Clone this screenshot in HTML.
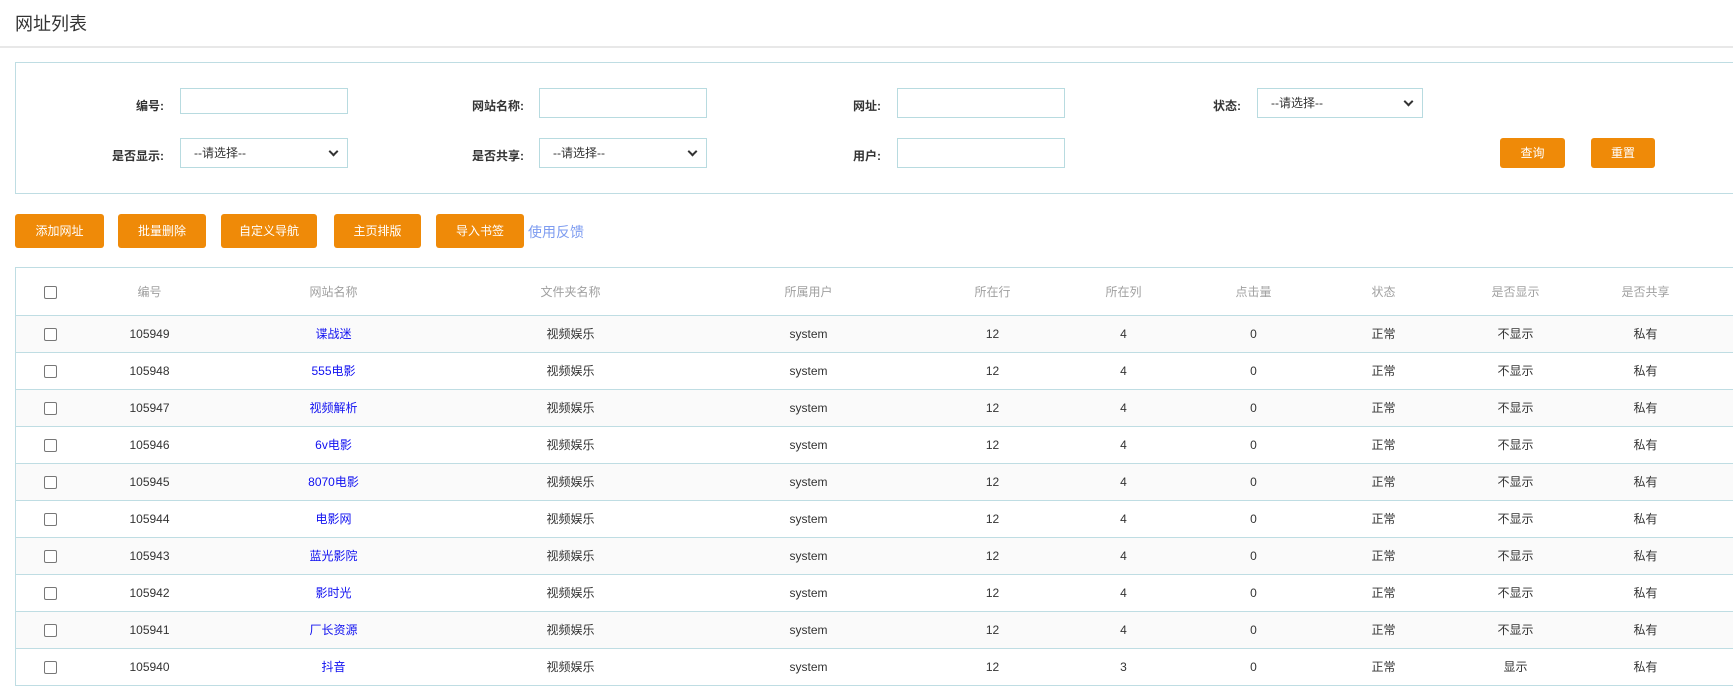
<!DOCTYPE html>
<html><head><meta charset="utf-8"><style>
*{box-sizing:border-box;margin:0;padding:0}
body{width:1733px;height:692px;overflow:hidden;background:#fff;font-family:"Liberation Sans","Noto Sans CJK SC",sans-serif;font-size:12px;color:#333;position:relative}
.abs{position:absolute}
.title{left:15px;top:10px;font-size:18px;color:#333}
.hline{left:0;top:46px;width:1733px;height:2px;background:#e8e8e8}
.search{left:15px;top:62px;width:1730px;height:132px;border:1px solid #bfdde3}
.lbl{font-weight:bold;font-size:12px;color:#333;text-align:right;width:100px;line-height:14px}
.inp{border:1px solid #b8dbe0;height:28px;background:#fff}
.sel{border:1px solid #b8dbe0;height:30px;background:#fff;padding-left:13px;line-height:28px;font-size:12px;color:#333}
.sel:after{content:"";position:absolute;right:10px;top:9px;width:5px;height:5px;border-right:2px solid #333;border-bottom:2px solid #333;transform:rotate(45deg)}
.btn{background:#ef8a08;color:#fff;border-radius:3px;text-align:center;font-size:12px}
table{position:absolute;left:15px;top:267px;border-collapse:collapse;table-layout:fixed;width:1730px}
td,th{text-align:center;font-size:12px;height:37px;border-bottom:1px solid #bfdde3;line-height:14px}
th{font-weight:normal;color:#a0a0a0;height:48px}
table{border-top:1px solid #bfdde3;border-left:1px solid #bfdde3}
tbody tr:nth-child(odd){background:#fafafa}
a{color:#1010f0;text-decoration:none}
.cb{display:inline-block;width:13px;height:13px;border:1px solid #777;border-radius:2px;vertical-align:middle;background:#fff}
</style></head><body>
<div class="abs title">网址列表</div>
<div class="abs hline"></div>
<div class="abs search"></div>
<div class="abs lbl" style="left:64px;top:99px">编号:</div>
<div class="abs inp" style="left:180px;top:88px;width:168px;height:26px"></div>
<div class="abs lbl" style="left:424px;top:99px">网站名称:</div>
<div class="abs inp" style="left:539px;top:88px;width:168px;height:30px"></div>
<div class="abs lbl" style="left:781px;top:99px">网址:</div>
<div class="abs inp" style="left:897px;top:88px;width:168px;height:30px"></div>
<div class="abs lbl" style="left:1141px;top:99px">状态:</div>
<div class="abs sel" style="left:1257px;top:88px;width:166px">--请选择--</div>
<div class="abs lbl" style="left:64px;top:149px">是否显示:</div>
<div class="abs sel" style="left:180px;top:138px;width:168px">--请选择--</div>
<div class="abs lbl" style="left:424px;top:149px">是否共享:</div>
<div class="abs sel" style="left:539px;top:138px;width:168px">--请选择--</div>
<div class="abs lbl" style="left:781px;top:149px">用户:</div>
<div class="abs inp" style="left:897px;top:138px;width:168px;height:30px"></div>
<div class="abs btn" style="left:1500px;top:138px;width:65px;height:30px;line-height:30px">查询</div>
<div class="abs btn" style="left:1591px;top:138px;width:64px;height:30px;line-height:30px">重置</div>
<div class="abs btn" style="left:15px;top:214px;width:89px;height:34px;line-height:34px">添加网址</div>
<div class="abs btn" style="left:118px;top:214px;width:88px;height:34px;line-height:34px">批量删除</div>
<div class="abs btn" style="left:221px;top:214px;width:96px;height:34px;line-height:34px">自定义导航</div>
<div class="abs btn" style="left:334px;top:214px;width:87px;height:34px;line-height:34px">主页排版</div>
<div class="abs btn" style="left:436px;top:214px;width:88px;height:34px;line-height:34px">导入书签</div>
<div class="abs" style="left:528px;top:222px;font-size:14px;color:#7e9cf0">使用反馈</div>
<table>
<colgroup><col style="width:70px"><col style="width:128px"><col style="width:240px"><col style="width:234px"><col style="width:242px"><col style="width:126px"><col style="width:136px"><col style="width:124px"><col style="width:136px"><col style="width:128px"><col style="width:132px"><col></colgroup>
<thead><tr><th><span class="cb"></span></th><th>编号</th><th>网站名称</th><th>文件夹名称</th><th>所属用户</th><th>所在行</th><th>所在列</th><th>点击量</th><th>状态</th><th>是否显示</th><th>是否共享</th><th></th></tr></thead>
<tbody>
<tr><td><span class="cb"></span></td><td>105949</td><td><a>谍战迷</a></td><td>视频娱乐</td><td>system</td><td>12</td><td>4</td><td>0</td><td>正常</td><td>不显示</td><td>私有</td><td></td></tr>
<tr><td><span class="cb"></span></td><td>105948</td><td><a>555电影</a></td><td>视频娱乐</td><td>system</td><td>12</td><td>4</td><td>0</td><td>正常</td><td>不显示</td><td>私有</td><td></td></tr>
<tr><td><span class="cb"></span></td><td>105947</td><td><a>视频解析</a></td><td>视频娱乐</td><td>system</td><td>12</td><td>4</td><td>0</td><td>正常</td><td>不显示</td><td>私有</td><td></td></tr>
<tr><td><span class="cb"></span></td><td>105946</td><td><a>6v电影</a></td><td>视频娱乐</td><td>system</td><td>12</td><td>4</td><td>0</td><td>正常</td><td>不显示</td><td>私有</td><td></td></tr>
<tr><td><span class="cb"></span></td><td>105945</td><td><a>8070电影</a></td><td>视频娱乐</td><td>system</td><td>12</td><td>4</td><td>0</td><td>正常</td><td>不显示</td><td>私有</td><td></td></tr>
<tr><td><span class="cb"></span></td><td>105944</td><td><a>电影网</a></td><td>视频娱乐</td><td>system</td><td>12</td><td>4</td><td>0</td><td>正常</td><td>不显示</td><td>私有</td><td></td></tr>
<tr><td><span class="cb"></span></td><td>105943</td><td><a>蓝光影院</a></td><td>视频娱乐</td><td>system</td><td>12</td><td>4</td><td>0</td><td>正常</td><td>不显示</td><td>私有</td><td></td></tr>
<tr><td><span class="cb"></span></td><td>105942</td><td><a>影时光</a></td><td>视频娱乐</td><td>system</td><td>12</td><td>4</td><td>0</td><td>正常</td><td>不显示</td><td>私有</td><td></td></tr>
<tr><td><span class="cb"></span></td><td>105941</td><td><a>厂长资源</a></td><td>视频娱乐</td><td>system</td><td>12</td><td>4</td><td>0</td><td>正常</td><td>不显示</td><td>私有</td><td></td></tr>
<tr><td><span class="cb"></span></td><td>105940</td><td><a>抖音</a></td><td>视频娱乐</td><td>system</td><td>12</td><td>3</td><td>0</td><td>正常</td><td>显示</td><td>私有</td><td></td></tr>
</tbody></table>
</body></html>
